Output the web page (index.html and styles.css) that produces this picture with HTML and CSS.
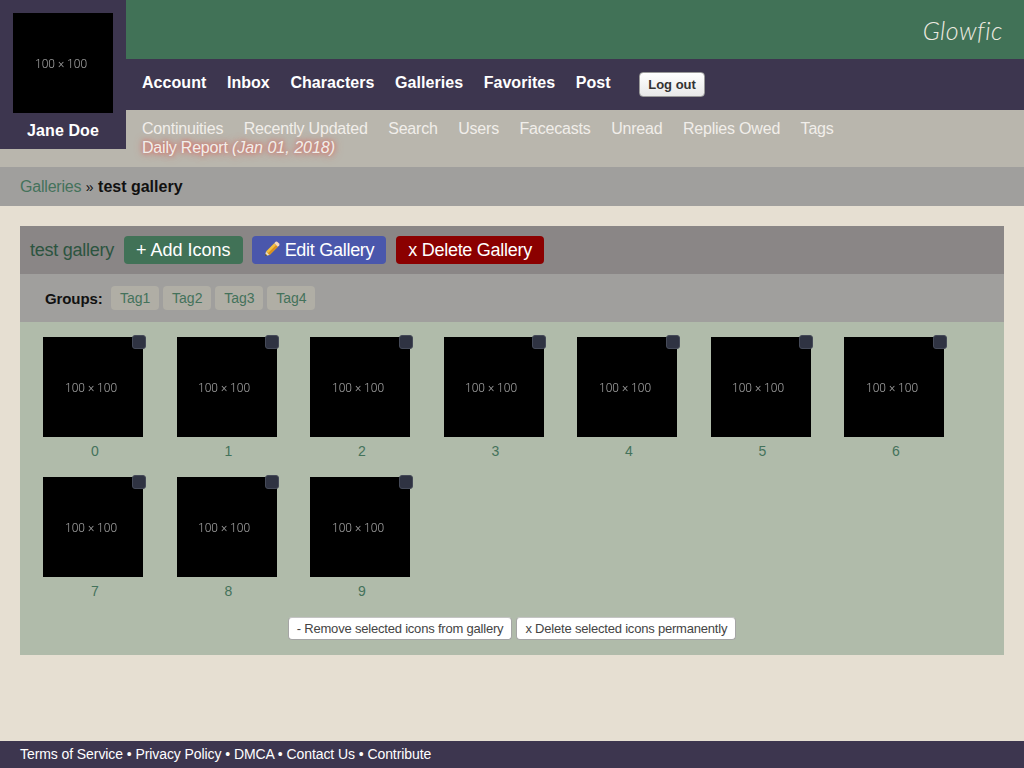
FILE: index.html
```html
<!DOCTYPE html>
<html lang="en">
<head>
  <meta charset="UTF-8" />
  <meta name="viewport" content="width=device-width, initial-scale=1.0"/>
  <title>test gallery | Glowfic</title>
  <link rel="stylesheet" href="styles.css">
</head>
<body>
  <header class="header">
    <div class="user">
      <div class="placeholder"><span>100 × 100</span></div>
      <div class="user-name">Jane Doe</div>
    </div>
    <div class="header-main">
      <div class="logo-bar"><span class="logo">Glowfic</span></div>
      <nav class="nav">
        <a href="#">Account</a>
        <a href="#">Inbox</a>
        <a href="#">Characters</a>
        <a href="#">Galleries</a>
        <a href="#">Favorites</a>
        <a href="#">Post</a>
        <button class="logout" type="button">Log out</button>
      </nav>
      <nav class="subnav">
        <a href="#">Continuities</a>
        <a href="#">Recently Updated</a>
        <a href="#">Search</a>
        <a href="#">Users</a>
        <a href="#">Facecasts</a>
        <a href="#">Unread</a>
        <a href="#">Replies Owed</a>
        <a href="#">Tags</a>
        <a href="#" class="daily">Daily Report <em>(Jan 01, 2018)</em></a>
      </nav>
    </div>
  </header>

  <div class="breadcrumbs"><a href="#">Galleries</a> <span class="sep">»</span> <b>test gallery</b></div>

  <main class="content">
    <div class="title-row">
      <span class="gallery-name">test gallery</span>
      <a href="#" class="btn btn-add">+ Add Icons</a>
      <a href="#" class="btn btn-edit">
        <svg class="pencil" width="16" height="16" viewBox="0 0 16 16">
          <path d="M1 15 L2 10.4 L5.6 14 Z" fill="#f5e3bd"/>
          <path d="M1 15 L1.5 12.7 L3.3 14.5 Z" fill="#4a3a20"/>
          <path d="M2 10.4 L10.2 2.2 L13.8 5.8 L5.6 14 Z" fill="#f4c040"/>
          <path d="M3.9 12.3 L12.1 4.1 L13.8 5.8 L5.6 14 Z" fill="#d9901f"/>
          <path d="M10.2 2.2 L11.6 .8 Q12.6 .2 13.5 .9 L15.1 2.5 Q15.8 3.4 15.2 4.4 L13.8 5.8 Z" fill="#f8d8b8"/>
        </svg>
        Edit Gallery
      </a>
      <a href="#" class="btn btn-delete">x Delete Gallery</a>
    </div>
    <div class="groups-row">
      <b class="groups-label">Groups:</b>
      <a href="#" class="tag">Tag1</a>
      <a href="#" class="tag">Tag2</a>
      <a href="#" class="tag">Tag3</a>
      <a href="#" class="tag">Tag4</a>
    </div>
    <div class="icons-panel">
      <div class="icons">
        <div class="icon"><div class="placeholder"><span>100 × 100</span></div><span class="check"></span><a href="#">0</a></div>
        <div class="icon"><div class="placeholder"><span>100 × 100</span></div><span class="check"></span><a href="#">1</a></div>
        <div class="icon"><div class="placeholder"><span>100 × 100</span></div><span class="check"></span><a href="#">2</a></div>
        <div class="icon"><div class="placeholder"><span>100 × 100</span></div><span class="check"></span><a href="#">3</a></div>
        <div class="icon"><div class="placeholder"><span>100 × 100</span></div><span class="check"></span><a href="#">4</a></div>
        <div class="icon"><div class="placeholder"><span>100 × 100</span></div><span class="check"></span><a href="#">5</a></div>
        <div class="icon"><div class="placeholder"><span>100 × 100</span></div><span class="check"></span><a href="#">6</a></div>
        <div class="icon"><div class="placeholder"><span>100 × 100</span></div><span class="check"></span><a href="#">7</a></div>
        <div class="icon"><div class="placeholder"><span>100 × 100</span></div><span class="check"></span><a href="#">8</a></div>
        <div class="icon"><div class="placeholder"><span>100 × 100</span></div><span class="check"></span><a href="#">9</a></div>
      </div>
      <div class="icon-actions">
        <button type="button" class="small-btn">- Remove selected icons from gallery</button>
        <button type="button" class="small-btn">x Delete selected icons permanently</button>
      </div>
    </div>
  </main>

  <footer class="footer">
    <a href="#">Terms of Service</a> • <a href="#">Privacy Policy</a> • <a href="#">DMCA</a> • <a href="#">Contact Us</a> • <a href="#">Contribute</a>
  </footer>
</body>
</html>
```

FILE: styles.css
```css
html, body {
  height: 100%;
}
body {
  margin: 0;
  display: flex;
  flex-direction: column;
  min-height: 768px;
  box-sizing: border-box;
  font-family: "Liberation Sans", Arial, sans-serif;
  font-size: 16px;
  background: #e6dfd2;
  color: #111;
}
a {
  text-decoration: none;
  color: #44725b;
}

.header {
  display: flex;
  align-items: flex-start;
  height: 167px;
  background: #b9b6ad;
}
.user {
  width: 126px;
  height: 149px;
  padding-top: 13px;
  box-sizing: border-box;
  background: #3d364f;
  flex: none;
}
.user .placeholder {
  margin: 0 auto;
}
.user-name {
  margin-top: 9px;
  text-align: center;
  color: #fff;
  font-weight: bold;
  letter-spacing: 0.1px;
  line-height: 18px;
}
.placeholder {
  width: 100px;
  height: 100px;
  padding: 2px 4px 0 0;
  box-sizing: border-box;
  background: #000;
  color: #a8a8a8;
  font-family: Roboto, sans-serif;
  font-weight: 300;
  font-size: 12px;
  display: flex;
  align-items: center;
  justify-content: center;
}
.placeholder span {
  will-change: transform;
}
.header-main {
  flex: 1;
}
.logo-bar {
  height: 59px;
  background: #417257;
  display: flex;
  align-items: center;
  justify-content: flex-end;
  padding-right: 21px;
}
.logo {
  font-family: Lato, sans-serif;
  font-weight: 300;
  font-style: italic;
  font-size: 25px;
  letter-spacing: 0.5px;
  color: #eeeae0;
}
.nav {
  height: 51px;
  box-sizing: border-box;
  padding: 15px 0 0 16px;
  background: #3d364f;
  display: flex;
  align-items: flex-start;
  gap: 20.55px;
}
.nav a {
  color: #fff;
  font-weight: bold;
  letter-spacing: 0.05px;
  line-height: 18px;
}
.logout {
  margin: -2px 0 0 8px;
  height: 25px;
  padding: 0 8px;
  border: 1px solid #999;
  border-radius: 4px;
  background: linear-gradient(#fff, #e8e8e8);
  color: #333;
  font-family: inherit;
  font-size: 13px;
  font-weight: bold;
}
.subnav {
  display: flex;
  flex-wrap: wrap;
  column-gap: 20.5px;
  row-gap: 1px;
  padding: 10px 0 0 16px;
  line-height: 18px;
  letter-spacing: -0.2px;
}
.subnav a {
  color: #f1eeea;
}
.subnav .daily {
  flex-basis: 100%;
  text-shadow: 0 0 8px #d9685e, 0 0 4px #d9685e;
}
.subnav em {
  letter-spacing: 0;
}

.breadcrumbs {
  height: 39px;
  line-height: 39px;
  padding-left: 20px;
  background: #a09f9d;
}
.breadcrumbs a {
  letter-spacing: -0.2px;
}
.breadcrumbs .sep {
  font-size: 14px;
}

.content {
  margin: 20px 20px 0;
}
.title-row {
  height: 48px;
  box-sizing: border-box;
  padding-left: 10px;
  display: flex;
  align-items: center;
  gap: 9px;
  background: #8a8686;
}
.gallery-name {
  font-size: 18px;
  letter-spacing: -0.25px;
  color: #2c5440;
  margin-right: 1px;
}
.btn {
  height: 28px;
  box-sizing: border-box;
  padding: 0 12px;
  display: flex;
  align-items: center;
  gap: 5px;
  border-radius: 4px;
  color: #fff;
  font-size: 18px;
  letter-spacing: -0.28px;
}
.btn-add {
  background: #417257;
  letter-spacing: 0;
}
.btn-edit { background: #4a57ac; }
.btn-delete {
  background: #8b0000;
  margin-left: 1px;
}
.pencil {
  margin-bottom: 3px;
}
.groups-row {
  height: 48px;
  box-sizing: border-box;
  padding-left: 25px;
  display: flex;
  align-items: center;
  gap: 4.1px;
  background: #a09f9d;
  font-size: 14px;
}
.groups-label {
  font-size: 15px;
  letter-spacing: -0.1px;
  margin-right: 4.5px;
}
.tag {
  height: 24px;
  line-height: 24px;
  padding: 0 8.8px;
  border-radius: 4px;
  background: #b0aea5;
}

.icons-panel {
  height: 333px;
  box-sizing: border-box;
  padding: 15px 0 0 23px;
  background: #b0bbaa;
}
.icons {
  display: flex;
  flex-wrap: wrap;
  column-gap: 29.5px;
}
.icon {
  position: relative;
  width: 104px;
  height: 140px;
  text-align: center;
}
.icon a {
  display: block;
  margin-top: 5px;
  line-height: 18px;
  font-size: 14px;
}
.check {
  position: absolute;
  top: -2px;
  right: 1.5px;
  width: 14px;
  height: 14px;
  box-sizing: border-box;
  border: 1px solid #454a58;
  border-radius: 3px;
  background: #2f3342;
}
.icon-actions {
  display: flex;
  justify-content: center;
  gap: 4px;
  margin: 0 0 0 -23px;
}
.small-btn {
  height: 23px;
  padding: 0 8px;
  border: 1px solid #a5a5a5;
  border-top-color: #c4c4c4;
  border-radius: 4px;
  background: #fff;
  color: #444;
  font-family: inherit;
  font-size: 13px;
  letter-spacing: -0.2px;
}

.footer {
  margin-top: auto;
  height: 27px;
  line-height: 27px;
  padding-left: 20px;
  background: #3d364f;
  color: #fff;
  font-size: 14px;
  letter-spacing: -0.08px;
}
.footer a {
  color: #fff;
}
```
